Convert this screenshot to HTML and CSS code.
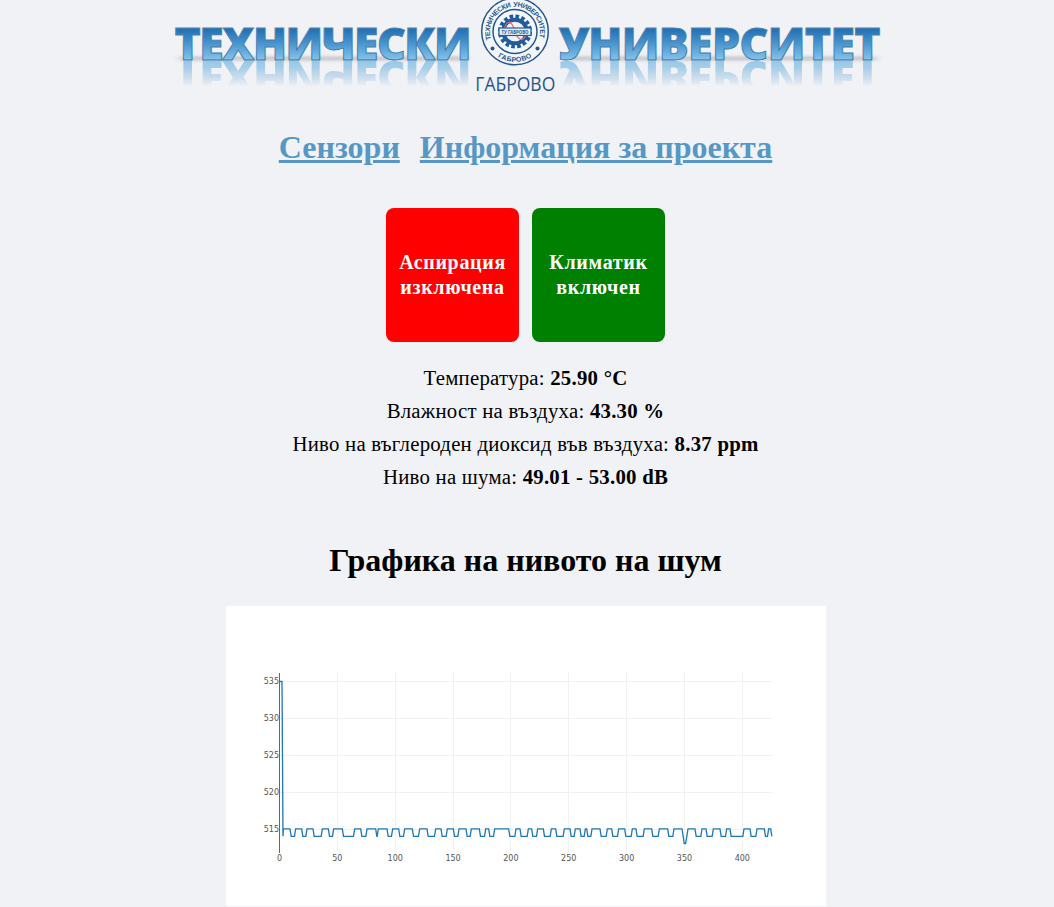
FILE: index.html
```
<!DOCTYPE html>
<html lang="bg">
<head>
<meta charset="utf-8">
<title>Сензори</title>
<link rel="stylesheet" href="styles.css">
</head>
<body>
<header class="banner">
<svg class="banner-art" width="720" height="100" viewBox="168 0 720 100">
  <defs>
    <linearGradient id="face" gradientUnits="userSpaceOnUse" x1="0" y1="27" x2="0" y2="60">
      <stop offset="0" stop-color="#1c6bb2"/><stop offset=".45" stop-color="#4490ca"/><stop offset="1" stop-color="#85c3ec"/>
    </linearGradient>
    <linearGradient id="edge" gradientUnits="userSpaceOnUse" x1="0" y1="27" x2="0" y2="60">
      <stop offset="0" stop-color="#5583aa"/><stop offset="1" stop-color="#3576a8"/>
    </linearGradient>
    <linearGradient id="fade" gradientUnits="userSpaceOnUse" x1="0" y1="60" x2="0" y2="30">
      <stop offset="0" stop-color="#fff" stop-opacity=".85"/><stop offset=".4" stop-color="#fff" stop-opacity=".35"/><stop offset=".85" stop-color="#fff" stop-opacity="0"/>
    </linearGradient>
    <mask id="fadeMask" maskUnits="userSpaceOnUse" x="160" y="0" width="740" height="62"><rect x="160" y="0" width="740" height="62" fill="url(#fade)"/></mask>
    <filter id="soft" filterUnits="userSpaceOnUse" x="168" y="48" width="720" height="20"><feGaussianBlur stdDeviation="4 1.5"/></filter>
    <path id="arcTop" d="M491.2 39.5 A25 25 0 1 1 538.8 39.5"/>
    <path id="arcBottom" d="M486.500 42 A30.300 30.300 0 0 0 543.500 42"/>
  </defs>
  <path class="shade" d="M180 58.500H466M564 58.500H876" filter="url(#soft)"/>
  <g class="title-mirror" transform="translate(0 120.5) scale(1 -1)" mask="url(#fadeMask)" aria-hidden="true">
    <text class="title" x="174.500" y="60" textLength="297" lengthAdjust="spacing">ТЕХНИЧЕСКИ</text>
    <text class="title" x="558.500" y="60" textLength="322" lengthAdjust="spacing">УНИВЕРСИТЕТ</text>
  </g>
  <text class="title title-main" x="174.500" y="60" textLength="297" lengthAdjust="spacing">ТЕХНИЧЕСКИ</text>
  <text class="title title-main" x="558.500" y="60" textLength="322" lengthAdjust="spacing">УНИВЕРСИТЕТ</text>
  <circle class="seal" cx="515" cy="31.500" r="33.300"/>
  <circle class="seal" cx="515" cy="31.500" r="22"/>
  <circle class="gear-teeth" cx="515" cy="31.500" r="15"/>
  <circle class="gear" cx="515" cy="31.500" r="11.800"/>
  <path class="wave" d="M503 31C508 17 512 22 515 31S523 45 528 30"/>
  <rect class="plate" x="499" y="28" width="32" height="7.500"/>
  <text class="plate-text" x="515" y="33.700" text-anchor="middle" textLength="27" lengthAdjust="spacingAndGlyphs">ТУ ГАБРОВО</text>
  <text class="seal-text"><textPath href="#arcTop" textLength="92">ТЕХНИЧЕСКИ&#160; УНИВЕРСИТЕТ</textPath></text>
  <text class="seal-text seal-city"><textPath href="#arcBottom" startOffset="50%" text-anchor="middle">ГАБРОВО</textPath></text>
  <circle class="dot" cx="492.500" cy="48.500" r="2"/><circle class="dot" cx="537.500" cy="48.500" r="2"/>
  <text class="city" x="475.300" y="90.500" textLength="80" lengthAdjust="spacingAndGlyphs">ГАБРОВО</text>
</svg>
</header>
<nav class="nav"><a href="#">Сензори</a><a href="#">Информация за проекта</a></nav>
<div class="tiles">
  <div class="tile tile-off">Аспирация изключена</div>
  <div class="tile tile-on">Климатик включен</div>
</div>
<div class="readings">
  <div>Температура: <b>25.90 °C</b></div>
  <div>Влажност на въздуха: <b>43.30 %</b></div>
  <div>Ниво на въглероден диоксид във въздуха: <b>8.37 ppm</b></div>
  <div>Ниво на шума: <b>49.01 - 53.00 dB</b></div>
</div>
<h1 class="heading">Графика на нивото на шум</h1>
<svg class="chart" id="chart" width="600" height="300" viewBox="226 606 600 300"></svg>
<script src="chart.js"></script>
</body>
</html>
```
FILE: styles.css
```
body { margin: 0; height: 907px; overflow: hidden; background: #f0f2f6; font-family: "Liberation Serif", "Times New Roman", serif; color: #000; display: flex; flex-direction: column; align-items: center; }
.banner { width: 1054px; height: 100px; }
.banner-art { display: block; margin-left: 168px; }
.title { font: 800 44.5px "Open Sans", "Noto Sans", sans-serif; fill: url(#face); }
.title-main { stroke: url(#edge); stroke-width: .9px; }
.shade { stroke: #a8a8aa; stroke-width: 4; opacity: .6; }
.seal { fill: #f4f7fa; stroke: #28568b; stroke-width: 1.5; }
.seal-text { font: bold 7px "Liberation Sans", sans-serif; fill: #28568b; }
.seal-city { letter-spacing: .35px; }
.gear { fill: #f0f3f7; stroke: #215b9c; stroke-width: 4; }
.gear-teeth { fill: none; stroke: #215b9c; stroke-width: 4; stroke-dasharray: 3.6 2.29; }
.wave { fill: none; stroke: #e66a70; stroke-width: 1.2; }
.plate { fill: #e6edf5; stroke: #215b9c; stroke-width: 1.2; }
.plate-text { font: bold 5px "Open Sans", sans-serif; fill: #215b9c; }
.dot { fill: #28568b; }
.city { font: 20px "Open Sans", sans-serif; fill: #28568b; }
.nav { display: flex; gap: 20px; width: 1051px; justify-content: center; align-self: flex-start; margin-top: 29px; font-size: 32px; line-height: 37px; font-weight: bold; }
.nav a { color: #5797c5; }
.tiles { display: flex; gap: 13px; margin-top: 42px; width: 1051px; justify-content: center; align-self: flex-start; }
.tile { box-sizing: border-box; width: 133px; height: 134px; border-radius: 8px; padding: 42px 10px; text-align: center; color: #fff; font-size: 20px; line-height: 25px; font-weight: bold; letter-spacing: .65px; }
.tile-off { background: #f00; }
.tile-on { background: #008000; }
.readings { width: 1051px; align-self: flex-start; margin-top: 19px; text-align: center; font-size: 20.8px; line-height: 33px; letter-spacing: .24px; }
.heading { width: 1051px; align-self: flex-start; margin: 48px 0 0; text-align: center; font-size: 32px; line-height: 38px; }
.chart { display: block; flex: none; margin: 27px 0 0 226px; align-self: flex-start; background: #fff; }
.grid { stroke: #f1f1f1; stroke-width: 1; }
.axis { stroke: #666; stroke-width: 1; }
.trace { fill: none; stroke: #1f77b4; stroke-width: 1.3; }
.tick { font: 8px "DejaVu Sans", Verdana, sans-serif; fill: #555; }
```
FILE: chart.js
```
const chart = document.getElementById("chart");
function add(tag, attrs, text) {
  const el = document.createElementNS("http://www.w3.org/2000/svg", tag);
  for (const key in attrs) el.setAttribute(key, attrs[key]);
  if (text !== undefined) el.textContent = text;
  chart.appendChild(el);
}
for (let i = 0; i < 9; i++) {
  const x = 279.5 + i * 57.85;
  if (i) add("line", { class: "grid", x1: Math.floor(x) + .5, x2: Math.floor(x) + .5, y1: 672, y2: 852 });
  add("text", { class: "tick", x: x, y: 861, "text-anchor": "middle" }, i * 50);
}
for (let i = 0; i < 5; i++) {
  const y = 681.5 + i * 36.9;
  add("line", { class: "grid", x1: 280, x2: 772, y1: Math.floor(y) + .5, y2: Math.floor(y) + .5 });
  add("text", { class: "tick", x: 279, y: Math.floor(y) + 3, "text-anchor": "end" }, 535 - i * 5);
}
add("line", { class: "axis", x1: 279.5, x2: 279.5, y1: 673, y2: 853 });
// Intervals where the level is 515, in thirds of a pixel from x = 270
const highs = [[40,60],[77,95],[111,129],[157,175],[191,217],[254,272],[291,317],[325,351],[368,386],[404,427],[449,471],
  [497,513],[532,550],[567,588],[604,628],[647,656],[674,716],[738,750],[775,785],[803,820],[844,857],[883,900],[916,930],[946,950],
  [966,990],[1012,1025],[1046,1064],[1087,1098],[1123,1145],[1168,1193],[1212,1236],[1254,1275],[1296,1308],[1330,1350],[1370,1380],
  [1422,1440],[1461,1483],[1496,1502]];
const points = ["279.5,681.5", "282,681.5", "283,836.3"];
for (const [a, b] of highs) {
  if (a > 40) points.push((270 + (a - 3.5) / 3) + ",836.3");
  points.push((270 + a / 3) + ",828.9", (270 + b / 3) + ",828.9", (270 + (b + 3.5) / 3) + ",836.3");
  if (b === 1236) points.push("684.2,843.5", "685.6,843.5");
}
add("polyline", { class: "trace", points: points.join(" ") });
```
